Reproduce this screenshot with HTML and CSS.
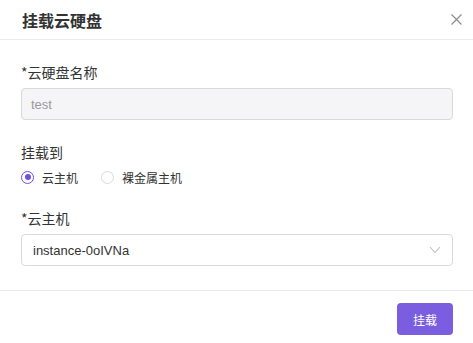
FILE: index.html
```html
<!DOCTYPE html>
<html lang="zh-CN">

<head>
    <meta charset="UTF-8">
    <meta name="viewport" content="width=device-width, initial-scale=1.0">
    <title>挂载云硬盘</title>
    <link rel="stylesheet" href="styles.css">
</head>

<body>
    <div class="dialog">
        <div class="dialog-header">
            <span class="dialog-title">挂载云硬盘</span>
            <span class="dialog-close">
                <svg width="11" height="11" viewBox="0 0 11 11">
                    <path d="M0.5 0.5 L10.5 10.5 M10.5 0.5 L0.5 10.5" stroke="#8c8c8c" stroke-width="1.2" fill="none" />
                </svg>
            </span>
        </div>

        <div class="dialog-body">
            <div class="form-item">
                <div class="form-label">*云硬盘名称</div>
                <div class="input disabled">test</div>
            </div>

            <div class="form-item">
                <div class="form-label">挂载到</div>
                <div class="radio-group">
                    <label class="radio checked"><span class="radio-dot"></span>云主机</label>
                    <label class="radio"><span class="radio-dot"></span>裸金属主机</label>
                </div>
            </div>

            <div class="form-item last">
                <div class="form-label">*云主机</div>
                <div class="input select">
                    <span>instance-0oIVNa</span>
                    <svg width="12" height="8" viewBox="0 0 12 8">
                        <path d="M1 1 L6 6.5 L11 1" stroke="#bfbfbf" stroke-width="1.1" fill="none" />
                    </svg>
                </div>
            </div>
        </div>

        <div class="dialog-footer">
            <div class="btn-primary">挂载</div>
        </div>
    </div>
</body>

</html>
```

FILE: styles.css
```css
body {
    margin: 0;
    background-color: #FFF;
    font-family: "Noto Sans CJK SC", "Liberation Sans", sans-serif;
    color: #333;
}

.dialog {
    width: 473px;
    height: 343px;
    background-color: #FFF;
}

.dialog-header {
    height: 39px;
    border-bottom: 1px solid #ebebeb;
    display: flex;
    align-items: center;
    justify-content: space-between;
    padding: 0 11px 0 22px;
}

.dialog-title {
    font-size: 16px;
    font-weight: bold;
    color: #333;
}

.dialog-close {
    display: flex;
    cursor: pointer;
}

.dialog-body {
    padding: 22px 20px 0 21px;
    border-bottom: 1px solid #ebebeb;
}

.form-item {
    margin-bottom: 22px;
}

.form-item.last {
    margin-bottom: 24px;
}

.form-label {
    font-size: 14px;
    line-height: 20px;
    margin-bottom: 6px;
    color: #333;
}

.input {
    height: 30px;
    border: 1px solid #d9d9d9;
    border-radius: 4px;
    padding: 0 11px;
    font-family: "Liberation Sans", Arial, sans-serif;
    font-size: 13px;
    display: flex;
    align-items: center;
    color: #333;
}

.input.disabled {
    background-color: #f5f5f7;
    color: #999;
    padding: 0 9px;
}

.select {
    justify-content: space-between;
    padding: 0 11px 0 11px;
}

.radio-group {
    display: flex;
    gap: 23px;
    height: 18px;
    align-items: center;
}

.radio {
    display: flex;
    align-items: center;
    font-size: 12px;
    color: #333;
    cursor: pointer;
}

.radio-dot {
    width: 11px;
    height: 11px;
    border: 1px solid #d9d9d9;
    border-radius: 50%;
    margin-right: 8px;
    position: relative;
}

.radio.checked .radio-dot {
    border-color: #6d4ee0;
}

.radio.checked .radio-dot::after {
    content: "";
    position: absolute;
    left: 2.5px;
    top: 2.5px;
    width: 6px;
    height: 6px;
    border-radius: 50%;
    background-color: #6d4ee0;
}

.dialog-footer {
    display: flex;
    justify-content: flex-end;
    padding: 12px 20px 0 0;
}

.btn-primary {
    width: 56px;
    height: 32px;
    border-radius: 4px;
    background-color: #7b5ee0;
    color: #FFF;
    font-size: 12px;
    display: flex;
    align-items: center;
    justify-content: center;
    cursor: pointer;
}
```
